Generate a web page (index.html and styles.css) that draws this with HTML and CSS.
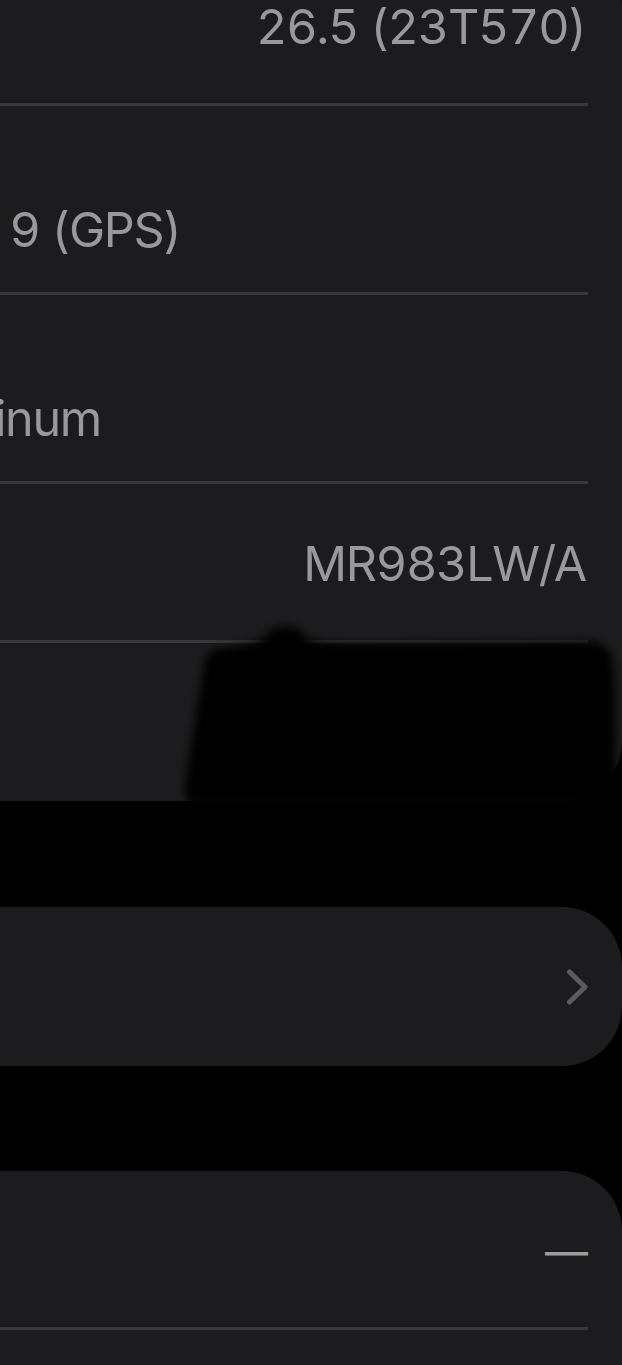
FILE: index.html
```html
<!DOCTYPE html>
<html lang="en">
<head>
  <meta charset="UTF-8" />
  <meta name="viewport" content="width=device-width, initial-scale=1.0"/>
  <title>About</title>
  <link rel="stylesheet" href="styles.css">
</head>
<body>

  <main class="screen">

    <section class="card">
      <div class="row"><span class="value">26.5 (23T570)</span></div>
      <div class="row row-tall"><span class="value model">Apple Watch Series 9 (GPS)</span></div>
      <div class="row row-tall"><span class="value finish">Silver Aluminum</span></div>
      <div class="row"><span class="value">MR983LW/A</span></div>
      <div class="row row-last"><span class="value"></span></div>

      <!-- redacted serial number -->
      <svg class="redact" width="442" height="195" viewBox="0 0 442 195">
        <defs>
          <filter id="soft" x="-10%" y="-20%" width="120%" height="140%">
            <feGaussianBlur stdDeviation="5"/>
          </filter>
        </defs>
        <path filter="url(#soft)" fill="#000"
          d="M36 34 C60 30 78 30 86 20 C94 8 118 8 124 20 C130 28 150 28 200 28 L404 26 C428 26 434 40 434 60 L436 160 C436 178 428 190 410 190 L16 190 C6 190 3 180 5 168 L22 62 C24 44 27 36 36 34 Z"/>
      </svg>
    </section>

    <section class="card card-gap">
      <div class="row row-last">
        <svg class="chevron" width="22" height="36" viewBox="0 0 22 36">
          <path d="M3.5 3 L19 18 L3.5 33" fill="none" stroke="#5b5b60" stroke-width="5" stroke-linecap="round" stroke-linejoin="round"/>
        </svg>
      </div>
    </section>

    <section class="card card-gap">
      <div class="row"><span class="dash">—</span></div>
      <div class="row row-last"></div>
    </section>

  </main>

</body>
</html>
```

FILE: styles.css
```css
* {
  box-sizing: border-box;
}

body {
  margin: 0;
  width: 622px;
  height: 1365px;
  overflow: hidden;
  background: #000;
  font-family: Inter, "Liberation Sans", sans-serif;
  color: #98989f;
}

/* list is scrolled, first row starts above the top edge */
.screen {
  margin-top: -53px;
}

.card {
  position: relative;
  background: #1c1c1e;
  border-radius: 0 60px 60px 0;
}

.card-gap {
  margin-top: 106px;
}

.card-gap + .card-gap {
  margin-top: 105px;
}

.row {
  display: flex;
  align-items: center;
  justify-content: flex-end;
  height: 159px;
  margin-right: 34px;
  padding-top: 4px;
  border-bottom: 3px solid #38383a;
  font-size: 48.5px;
  line-height: 60px;
  letter-spacing: -1.3px;
  font-feature-settings: "tnum";
}

.row-last {
  border-bottom: none;
  height: 158px;
}

.card-gap .row-last {
  height: 159px;
}

/* wrapped values sit on a second line, left part runs off screen */
.row-tall {
  height: 189px;
  align-items: flex-end;
  padding-bottom: 32px;
}

.value {
  white-space: nowrap;
  padding-right: 2px;
}

.value.model {
  margin-right: 405px;
}

.value.finish {
  margin-right: 485px;
}

.dash {
  font-size: 43px;
  letter-spacing: 0;
  color: #9c9ca1;
}

.chevron {
  display: block;
  margin-top: -4px;
}

.redact {
  position: absolute;
  left: 180px;
  top: 668px;
  overflow: visible;
}
```
